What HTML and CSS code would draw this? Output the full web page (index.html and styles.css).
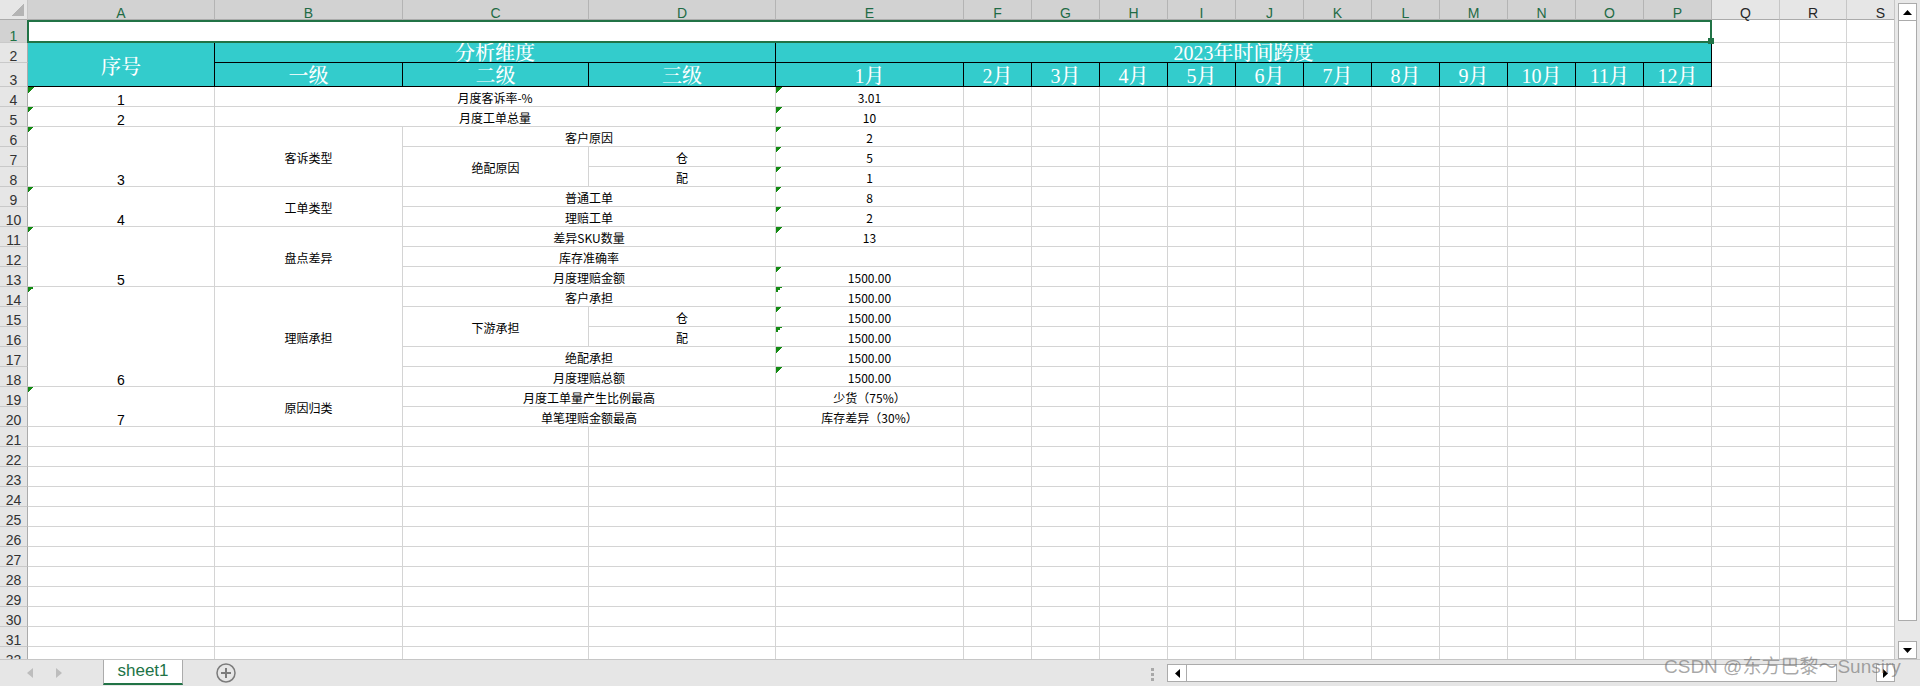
FILE: index.html
```html
<!DOCTYPE html>
<html lang="zh-CN">
<head>
<meta charset="utf-8">
<title>sheet1</title>
<link rel="stylesheet" href="styles.css">
</head>
<body>
<div class="app">
  <div class="main">
    <div class="sheet">
      <table class="grid">
        <colgroup>
          <col class="w-rh"><col class="w-a"><col class="w-b"><col class="w-c"><col class="w-d"><col class="w-e">
          <col class="w-m"><col class="w-m"><col class="w-m"><col class="w-m"><col class="w-m"><col class="w-m">
          <col class="w-m"><col class="w-m"><col class="w-m"><col class="w-m"><col class="w-m">
          <col class="w-m"><col class="w-r"><col class="w-m">
        </colgroup>
        <thead>
          <tr class="h20"><th class="corner"></th><th class="ch on">A</th><th class="ch on">B</th><th class="ch on">C</th><th class="ch on">D</th><th class="ch on">E</th><th class="ch on">F</th><th class="ch on">G</th><th class="ch on">H</th><th class="ch on">I</th><th class="ch on">J</th><th class="ch on">K</th><th class="ch on">L</th><th class="ch on">M</th><th class="ch on">N</th><th class="ch on">O</th><th class="ch on">P</th><th class="ch">Q</th><th class="ch">R</th><th class="ch">S</th></tr>
        </thead>
        <tbody>
          <tr class="h23"><th class="rh on">1</th><td colspan="16" class="sel"></td><td></td><td></td><td></td></tr>
          <tr class="h20"><th class="rh">2</th><td rowspan="2" class="hd big">序号</td><td colspan="3" class="hd">分析维度</td><td colspan="12" class="hd">2023年时间跨度</td><td></td><td></td><td></td></tr>
          <tr class="h24"><th class="rh">3</th><td class="hd lo">一级</td><td class="hd lo">二级</td><td class="hd lo">三级</td><td class="hd lo">1月</td><td class="hd lo">2月</td><td class="hd lo">3月</td><td class="hd lo">4月</td><td class="hd lo">5月</td><td class="hd lo">6月</td><td class="hd lo">7月</td><td class="hd lo">8月</td><td class="hd lo">9月</td><td class="hd lo">10月</td><td class="hd lo">11月</td><td class="hd lo">12月</td><td></td><td></td><td></td></tr>
          <tr class="h20"><th class="rh">4</th><td class="n t">1</td><td colspan="3">月度客诉率-%</td><td class="t">3.01</td><td></td><td></td><td></td><td></td><td></td><td></td><td></td><td></td><td></td><td></td><td></td><td></td><td></td><td></td></tr>
          <tr class="h20"><th class="rh">5</th><td class="n t">2</td><td colspan="3">月度工单总量</td><td class="t">10</td><td></td><td></td><td></td><td></td><td></td><td></td><td></td><td></td><td></td><td></td><td></td><td></td><td></td><td></td></tr>
          <tr class="h20"><th class="rh">6</th><td rowspan="3" class="n t">3</td><td rowspan="3">客诉类型</td><td colspan="2">客户原因</td><td class="t">2</td><td></td><td></td><td></td><td></td><td></td><td></td><td></td><td></td><td></td><td></td><td></td><td></td><td></td><td></td></tr>
          <tr class="h20"><th class="rh">7</th><td rowspan="2">绝配原因</td><td>仓</td><td class="t">5</td><td></td><td></td><td></td><td></td><td></td><td></td><td></td><td></td><td></td><td></td><td></td><td></td><td></td><td></td></tr>
          <tr class="h20"><th class="rh">8</th><td>配</td><td class="t">1</td><td></td><td></td><td></td><td></td><td></td><td></td><td></td><td></td><td></td><td></td><td></td><td></td><td></td><td></td></tr>
          <tr class="h20"><th class="rh">9</th><td rowspan="2" class="n t">4</td><td rowspan="2">工单类型</td><td colspan="2">普通工单</td><td class="t">8</td><td></td><td></td><td></td><td></td><td></td><td></td><td></td><td></td><td></td><td></td><td></td><td></td><td></td><td></td></tr>
          <tr class="h20"><th class="rh">10</th><td colspan="2">理赔工单</td><td class="t">2</td><td></td><td></td><td></td><td></td><td></td><td></td><td></td><td></td><td></td><td></td><td></td><td></td><td></td><td></td></tr>
          <tr class="h20"><th class="rh">11</th><td rowspan="3" class="n t">5</td><td rowspan="3">盘点差异</td><td colspan="2">差异SKU数量</td><td class="t">13</td><td></td><td></td><td></td><td></td><td></td><td></td><td></td><td></td><td></td><td></td><td></td><td></td><td></td><td></td></tr>
          <tr class="h20"><th class="rh">12</th><td colspan="2">库存准确率</td><td></td><td></td><td></td><td></td><td></td><td></td><td></td><td></td><td></td><td></td><td></td><td></td><td></td><td></td><td></td></tr>
          <tr class="h20"><th class="rh">13</th><td colspan="2">月度理赔金额</td><td class="t">1500.00</td><td></td><td></td><td></td><td></td><td></td><td></td><td></td><td></td><td></td><td></td><td></td><td></td><td></td><td></td></tr>
          <tr class="h20"><th class="rh">14</th><td rowspan="5" class="n t">6</td><td rowspan="5">理赔承担</td><td colspan="2">客户承担</td><td class="t">1500.00</td><td></td><td></td><td></td><td></td><td></td><td></td><td></td><td></td><td></td><td></td><td></td><td></td><td></td><td></td></tr>
          <tr class="h20"><th class="rh">15</th><td rowspan="2">下游承担</td><td>仓</td><td class="t">1500.00</td><td></td><td></td><td></td><td></td><td></td><td></td><td></td><td></td><td></td><td></td><td></td><td></td><td></td><td></td></tr>
          <tr class="h20"><th class="rh">16</th><td>配</td><td class="t">1500.00</td><td></td><td></td><td></td><td></td><td></td><td></td><td></td><td></td><td></td><td></td><td></td><td></td><td></td><td></td></tr>
          <tr class="h20"><th class="rh">17</th><td colspan="2">绝配承担</td><td class="t">1500.00</td><td></td><td></td><td></td><td></td><td></td><td></td><td></td><td></td><td></td><td></td><td></td><td></td><td></td><td></td></tr>
          <tr class="h20"><th class="rh">18</th><td colspan="2">月度理赔总额</td><td class="t">1500.00</td><td></td><td></td><td></td><td></td><td></td><td></td><td></td><td></td><td></td><td></td><td></td><td></td><td></td><td></td></tr>
          <tr class="h20"><th class="rh">19</th><td rowspan="2" class="n t">7</td><td rowspan="2">原因归类</td><td colspan="2">月度工单量产生比例最高</td><td>少货（75%）</td><td></td><td></td><td></td><td></td><td></td><td></td><td></td><td></td><td></td><td></td><td></td><td></td><td></td><td></td></tr>
          <tr class="h20"><th class="rh">20</th><td colspan="2">单笔理赔金额最高</td><td>库存差异（30%）</td><td></td><td></td><td></td><td></td><td></td><td></td><td></td><td></td><td></td><td></td><td></td><td></td><td></td><td></td></tr>
          <tr class="h20"><th class="rh">21</th><td></td><td></td><td></td><td></td><td></td><td></td><td></td><td></td><td></td><td></td><td></td><td></td><td></td><td></td><td></td><td></td><td></td><td></td><td></td></tr>
          <tr class="h20"><th class="rh">22</th><td></td><td></td><td></td><td></td><td></td><td></td><td></td><td></td><td></td><td></td><td></td><td></td><td></td><td></td><td></td><td></td><td></td><td></td><td></td></tr>
          <tr class="h20"><th class="rh">23</th><td></td><td></td><td></td><td></td><td></td><td></td><td></td><td></td><td></td><td></td><td></td><td></td><td></td><td></td><td></td><td></td><td></td><td></td><td></td></tr>
          <tr class="h20"><th class="rh">24</th><td></td><td></td><td></td><td></td><td></td><td></td><td></td><td></td><td></td><td></td><td></td><td></td><td></td><td></td><td></td><td></td><td></td><td></td><td></td></tr>
          <tr class="h20"><th class="rh">25</th><td></td><td></td><td></td><td></td><td></td><td></td><td></td><td></td><td></td><td></td><td></td><td></td><td></td><td></td><td></td><td></td><td></td><td></td><td></td></tr>
          <tr class="h20"><th class="rh">26</th><td></td><td></td><td></td><td></td><td></td><td></td><td></td><td></td><td></td><td></td><td></td><td></td><td></td><td></td><td></td><td></td><td></td><td></td><td></td></tr>
          <tr class="h20"><th class="rh">27</th><td></td><td></td><td></td><td></td><td></td><td></td><td></td><td></td><td></td><td></td><td></td><td></td><td></td><td></td><td></td><td></td><td></td><td></td><td></td></tr>
          <tr class="h20"><th class="rh">28</th><td></td><td></td><td></td><td></td><td></td><td></td><td></td><td></td><td></td><td></td><td></td><td></td><td></td><td></td><td></td><td></td><td></td><td></td><td></td></tr>
          <tr class="h20"><th class="rh">29</th><td></td><td></td><td></td><td></td><td></td><td></td><td></td><td></td><td></td><td></td><td></td><td></td><td></td><td></td><td></td><td></td><td></td><td></td><td></td></tr>
          <tr class="h20"><th class="rh">30</th><td></td><td></td><td></td><td></td><td></td><td></td><td></td><td></td><td></td><td></td><td></td><td></td><td></td><td></td><td></td><td></td><td></td><td></td><td></td></tr>
          <tr class="h20"><th class="rh">31</th><td></td><td></td><td></td><td></td><td></td><td></td><td></td><td></td><td></td><td></td><td></td><td></td><td></td><td></td><td></td><td></td><td></td><td></td><td></td></tr>
          <tr class="h20"><th class="rh">32</th><td></td><td></td><td></td><td></td><td></td><td></td><td></td><td></td><td></td><td></td><td></td><td></td><td></td><td></td><td></td><td></td><td></td><td></td><td></td></tr>
        </tbody>
      </table>
    </div>
    <div class="vscroll">
      <div class="sbtn"><svg width="9" height="5" viewBox="0 0 9 5"><path d="M0 5 L4.5 0 L9 5 Z" fill="#000"/></svg></div>
      <div class="vthumb"></div>
      <div class="sbtn down"><svg width="9" height="5" viewBox="0 0 9 5"><path d="M0 0 L4.5 5 L9 0 Z" fill="#000"/></svg></div>
    </div>
  </div>
  <div class="tabbar">
    <div class="nav">
      <svg width="6" height="10" viewBox="0 0 6 10"><path d="M6 0 L0 5 L6 10 Z" fill="#bdbdbd"/></svg>
      <svg width="6" height="10" viewBox="0 0 6 10"><path d="M0 0 L6 5 L0 10 Z" fill="#bdbdbd"/></svg>
    </div>
    <div class="tab">sheet1</div>
    <svg class="plus" width="20" height="20" viewBox="0 0 20 20"><circle cx="10" cy="10" r="9" fill="none" stroke="#7b7b7b" stroke-width="1.5"/><path d="M10 5 V15 M5 10 H15" stroke="#7b7b7b" stroke-width="2"/></svg>
    <div class="spacer"></div>
    <svg class="dots" width="3" height="14" viewBox="0 0 3 14"><rect x="0" y="0" width="3" height="3" fill="#a8a8a8"/><rect x="0" y="5" width="3" height="3" fill="#a8a8a8"/><rect x="0" y="10" width="3" height="3" fill="#a8a8a8"/></svg>
    <div class="hscroll">
      <div class="hbtn left"><svg width="5" height="9" viewBox="0 0 5 9"><path d="M5 0 L0 4.5 L5 9 Z" fill="#000"/></svg></div>
      <div class="hthumb"></div>
      <div class="htrack"></div>
      <div class="hbtn right"><svg width="5" height="9" viewBox="0 0 5 9"><path d="M0 0 L5 4.5 L0 9 Z" fill="#000"/></svg></div>
    </div>
  </div>
</div>
<div class="wm">CSDN @东方巴黎～Sunsiry</div>
</body>
</html>
```

FILE: styles.css
```css
* { box-sizing: border-box; }
html, body { margin: 0; padding: 0; }
body {
  width: 1920px;
  height: 686px;
  overflow: hidden;
  background: #fff;
  position: relative;
  font-family: "Noto Sans CJK SC", "Liberation Sans", sans-serif;
}
.app { display: flex; flex-direction: column; height: 686px; }
.main { display: flex; height: 659px; }
.sheet { flex: 1; overflow: hidden; }

/* grid */
.grid {
  border-collapse: separate;
  border-spacing: 0;
  table-layout: fixed;
  width: 1915px;
}
.w-rh { width: 28px; }
.w-a { width: 187px; }
.w-b { width: 188px; }
.w-c { width: 186px; }
.w-d { width: 187px; }
.w-e { width: 188px; }
.w-m { width: 68px; }
.w-r { width: 67px; }

.h20 { height: 20px; }
.h23 { height: 23px; }
.h24 { height: 24px; }

.grid td, .grid th {
  padding: 0;
  border-right: 1px solid #d4d4d4;
  border-bottom: 1px solid #d4d4d4;
  text-align: center;
  vertical-align: middle;
  white-space: nowrap;
  font-weight: normal;
}
.grid td {
  font-size: 12px;
  line-height: 14px;
  padding-top: 2px;
  color: #000;
}

.corner {
  background: linear-gradient(to bottom right, transparent 50%, #b4b4b4 50%) no-repeat right 3px bottom 3px / 12px 12px, #e6e6e6;
  border-right-color: #c6c6c6 !important;
  border-bottom-color: #ababab !important;
}
.ch {
  background: #e6e6e6;
  border-right-color: #c6c6c6 !important;
  border-bottom-color: #ababab !important;
  font: 14px/12px "Liberation Sans", sans-serif;
  color: #262626;
  vertical-align: bottom !important;
}
.ch.on { background: #d2d2d2; color: #1f6b45; border-right-color: #b4b4b4 !important; }

.rh {
  background: #e6e6e6;
  border-right-color: #ababab !important;
  border-bottom-color: #c9c9c9 !important;
  font: 14px/12px "Liberation Sans", sans-serif;
  color: #333;
  vertical-align: bottom !important;
}
.rh.on { background: #d2d2d2; color: #217346; }

.sel { position: relative; }
.sel::after {
  content: "";
  position: absolute;
  left: -1px;
  top: 0;
  right: -1px;
  bottom: -1px;
  border: 2px solid #217346;
}
.sel::before {
  content: "";
  position: absolute;
  right: -3px;
  bottom: -2px;
  width: 6px;
  height: 6px;
  background: #217346;
  z-index: 1;
}

.grid td.hd {
  background: #33cccc;
  color: #fff;
  font-family: "Liberation Serif", "Noto Serif CJK SC", "Noto Sans CJK SC", serif;
  font-size: 20px;
  font-weight: 500;
  line-height: 18px;
  padding-top: 1px;
  border-right-color: #000;
  border-bottom-color: #000;
}
.grid td.hd.big { padding-top: 4px; }
.grid td.hd.lo { vertical-align: bottom; line-height: 20px; padding-top: 0; }

.grid td.n {
  font-family: "Liberation Sans", sans-serif;
  font-size: 14px;
  line-height: 12px;
  vertical-align: bottom;
  padding-top: 0;
}
.grid td.t {
  background: linear-gradient(to bottom right, #118a11 50%, transparent 50%) no-repeat 0 0 / 6px 6px;
}

/* vertical scrollbar */
.vscroll {
  width: 26px;
  background: #e8e8e8;
  border-left: 1px solid #c6c6c6;
  display: flex;
  flex-direction: column;
  padding: 3px 3px 0 3px;
}
.sbtn {
  height: 18px;
  background: #fff;
  border: 1px solid #ababab;
  display: flex;
  align-items: center;
  justify-content: center;
  flex-shrink: 0;
}
.sbtn.down { margin-top: auto; }
.vthumb {
  height: 600px;
  background: #fff;
  border: 1px solid #ababab;
  border-top: none;
  flex-shrink: 0;
}

/* tab bar */
.tabbar {
  height: 27px;
  background: #e6e6e6;
  border-top: 1px solid #c6c6c6;
  display: flex;
  align-items: flex-start;
  padding-right: 25px;
}
.nav {
  width: 103px;
  height: 26px;
  display: flex;
  align-items: center;
  gap: 23px;
  padding-left: 27px;
}
.tab {
  width: 80px;
  height: 25px;
  background: #fff;
  border-left: 1px solid #ababab;
  border-right: 1px solid #ababab;
  border-bottom: 2px solid #217346;
  color: #217346;
  font: 17px/22px "Liberation Sans", sans-serif;
  text-align: center;
}
.plus { margin-left: 33px; margin-top: 3px; }
.spacer { flex: 1; }
.dots { margin-top: 8px; margin-right: 13px; }
.hscroll {
  width: 728px;
  height: 18px;
  margin-top: 4px;
  display: flex;
}
.hbtn {
  width: 20px;
  height: 18px;
  background: #fff;
  border: 1px solid #ababab;
  display: flex;
  align-items: center;
  justify-content: center;
}
.hbtn.right { width: 19px; }
.hthumb {
  width: 650px;
  height: 18px;
  background: #fff;
  border: 1px solid #ababab;
  border-left: none;
}
.htrack { flex: 1; }

.wm {
  position: absolute;
  left: 1664px;
  top: 656px;
  font: 19px/22px "Liberation Sans", "Noto Sans CJK SC", sans-serif;
  color: rgba(110, 110, 110, 0.6);
  white-space: nowrap;
}
```
